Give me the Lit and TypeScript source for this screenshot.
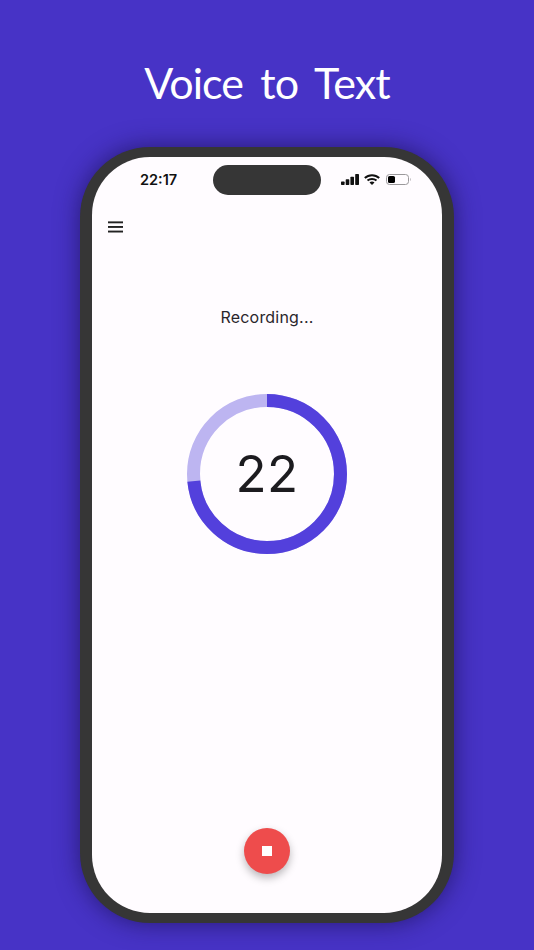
import { LitElement, html, css, svg } from "lit";
import { customElement } from "lit/decorators.js";

const R = 73.5;
const C = 2 * Math.PI * R;

@customElement("app-root")
export class AppRoot extends LitElement {
  static styles = css`
    :host { display: block; width: 534px; height: 950px; overflow: hidden; background: #4733c6; font-family: "Inter", "Liberation Sans", sans-serif; }
    .page { display: flex; flex-direction: column; align-items: center; height: 950px; box-sizing: border-box; padding-top: 56px; }
    h1 { margin: 0; height: 54px; font: 400 43px/54px "Lato", "Liberation Sans", sans-serif; color: #fff; letter-spacing: -0.9px; word-spacing: 7px; white-space: nowrap; }
    .phone { margin-top: 37px; width: 374px; height: 776px; box-sizing: border-box; padding: 10px 12px; border-radius: 70px; background: #363636; box-shadow: 0 0 24px rgba(25, 16, 80, 0.7); flex: none; }
    .screen { position: relative; height: 756px; border-radius: 58px; background: #fffcff; display: flex; flex-direction: column; align-items: center; overflow: hidden; }
    .island { position: absolute; top: 7.5px; left: 121px; width: 108px; height: 30px; border-radius: 15px; background: #363636; }
    .status { align-self: stretch; height: 46px; display: flex; align-items: center; justify-content: space-between; padding: 0 31px 0 48px; box-sizing: border-box; }
    .time { font: 600 14.5px/18px "Inter", "Liberation Sans", sans-serif; color: #111; }
    .icons { display: flex; align-items: center; gap: 5px; margin-top: -1px; }
    .icons svg { display: block; }
    .bar { align-self: stretch; height: 48px; padding-left: 16px; display: flex; align-items: center; }
    .bar svg { display: block; }
    .label { margin-top: 56px; font: 400 16px/20px "Inter", "Liberation Sans", sans-serif; letter-spacing: 0.2px; color: #2a262c; }
    .ring { margin-top: 67px; position: relative; width: 160px; height: 160px; display: flex; align-items: center; justify-content: center; }
    .ring svg { position: absolute; inset: 0; }
    .count { font: 400 51px/60px "Inter", "Liberation Sans", sans-serif; letter-spacing: 0.3px; color: #1c1b1f; }
    .spacer { flex: 1; }
    .fab { width: 46px; height: 46px; margin-bottom: 39px; border: 0; padding: 0; border-radius: 50%; background: #ee4c4c; display: flex; align-items: center; justify-content: center; box-shadow: 0 4px 8px rgba(0, 0, 0, 0.28); }
    .stop { width: 10px; height: 10px; background: #fff; }
  `;

  render() {
    const value = 22 / 30;
    return html`
      <div class="page">
        <h1>Voice to Text</h1>
        <div class="phone">
          <div class="screen">
            <div class="island"></div>
            <div class="status">
              <span class="time">22:17</span>
              <div class="icons">
                <svg width="18" height="11" viewBox="0 0 18 11" fill="#111">
                  <rect x="0" y="7.5" width="3.6" height="3.5" rx=".7"></rect>
                  <rect x="4.7" y="5.2" width="3.6" height="5.8" rx=".7"></rect>
                  <rect x="9.4" y="2.8" width="3.6" height="8.2" rx=".7"></rect>
                  <rect x="14.2" y="0" width="3.8" height="11" rx=".7"></rect>
                </svg>
                <svg width="16" height="11" viewBox="0 0 16 11" fill="none" stroke="#111" stroke-width="2">
                  <path d="M.8 4 C4.8 .2 11.2 .2 15.2 4"></path>
                  <path d="M3.5 6.6 C6 4.4 10 4.4 12.5 6.6"></path>
                  <path d="M8 11 L5.5 8.5 C7 7.3 9 7.3 10.5 8.5 Z" fill="#111" stroke="none"></path>
                </svg>
                <svg width="25" height="11" viewBox="0 0 25 11" style="margin-left:1px">
                  <rect x=".5" y=".5" width="22" height="10" rx="3" fill="#fffcff" stroke="#9a989b"></rect>
                  <rect x="2" y="2" width="7" height="7" rx="1.6" fill="#000"></rect>
                  <path d="M24 4 C24.8 4.5 24.8 6.5 24 7 Z" fill="#9a989b"></path>
                </svg>
              </div>
            </div>
            <div class="bar">
              <svg width="15" height="12" viewBox="0 0 15 12" fill="#222">
                <rect x="0" y="0.4" width="15" height="1.9"></rect>
                <rect x="0" y="5" width="15" height="1.9"></rect>
                <rect x="0" y="9.6" width="15" height="1.9"></rect>
              </svg>
            </div>
            <div class="label">Recording...</div>
            <div class="ring">
              <svg width="160" height="160" viewBox="0 0 160 160" fill="none" stroke-width="13">
                ${svg`<circle cx="80" cy="80" r=${R} stroke="#bdb5f1"></circle>
                <circle cx="80" cy="80" r=${R} stroke="#5340dc" stroke-dasharray="${C * value} ${C}" transform="rotate(-90 80 80)"></circle>`}
              </svg>
              <span class="count">22</span>
            </div>
            <div class="spacer"></div>
            <button class="fab" aria-label="Stop"><span class="stop"></span></button>
          </div>
        </div>
      </div>
    `;
  }
}
